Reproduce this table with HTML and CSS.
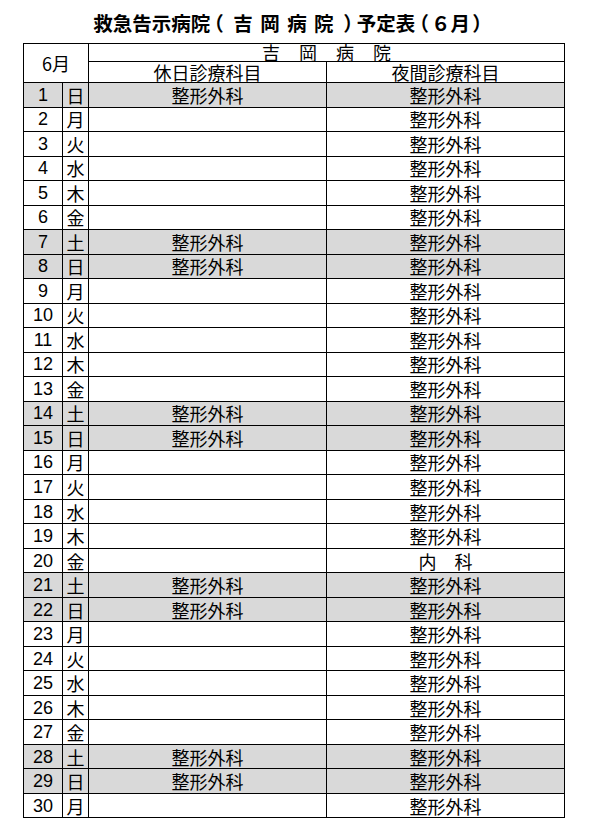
FILE: index.html
```html
<!DOCTYPE html>
<html lang="ja">
<head>
<meta charset="utf-8">
<title>救急告示病院 予定表</title>
<link rel="stylesheet" href="styles.css">
</head>
<body>
<div class="page">
  <h1 class="title">救急告示病院<span class="p">（</span> 吉 岡 病 院 <span class="p">）</span>予定表<span class="p">（</span>６月<span class="p">）</span></h1>
  <table class="sched">
    <colgroup><col class="c-num"><col class="c-wd"><col class="c-hol"><col class="c-night"></colgroup>
    <thead>
      <tr class="h1"><th colspan="2" rowspan="2" class="month">6月</th><th colspan="2" class="hosp"><span>吉</span><span>岡</span><span>病</span><span>院</span></th></tr>
      <tr class="h2"><th>休日診療科目</th><th>夜間診療科目</th></tr>
    </thead>
    <tbody>
      <tr class="we"><td class="num">1</td><td class="wd">日</td><td>整形外科</td><td>整形外科</td></tr>
      <tr><td class="num">2</td><td class="wd">月</td><td></td><td>整形外科</td></tr>
      <tr><td class="num">3</td><td class="wd">火</td><td></td><td>整形外科</td></tr>
      <tr><td class="num">4</td><td class="wd">水</td><td></td><td>整形外科</td></tr>
      <tr><td class="num">5</td><td class="wd">木</td><td></td><td>整形外科</td></tr>
      <tr><td class="num">6</td><td class="wd">金</td><td></td><td>整形外科</td></tr>
      <tr class="we"><td class="num">7</td><td class="wd">土</td><td>整形外科</td><td>整形外科</td></tr>
      <tr class="we"><td class="num">8</td><td class="wd">日</td><td>整形外科</td><td>整形外科</td></tr>
      <tr><td class="num">9</td><td class="wd">月</td><td></td><td>整形外科</td></tr>
      <tr><td class="num">10</td><td class="wd">火</td><td></td><td>整形外科</td></tr>
      <tr><td class="num">11</td><td class="wd">水</td><td></td><td>整形外科</td></tr>
      <tr><td class="num">12</td><td class="wd">木</td><td></td><td>整形外科</td></tr>
      <tr><td class="num">13</td><td class="wd">金</td><td></td><td>整形外科</td></tr>
      <tr class="we"><td class="num">14</td><td class="wd">土</td><td>整形外科</td><td>整形外科</td></tr>
      <tr class="we"><td class="num">15</td><td class="wd">日</td><td>整形外科</td><td>整形外科</td></tr>
      <tr><td class="num">16</td><td class="wd">月</td><td></td><td>整形外科</td></tr>
      <tr><td class="num">17</td><td class="wd">火</td><td></td><td>整形外科</td></tr>
      <tr><td class="num">18</td><td class="wd">水</td><td></td><td>整形外科</td></tr>
      <tr><td class="num">19</td><td class="wd">木</td><td></td><td>整形外科</td></tr>
      <tr><td class="num">20</td><td class="wd">金</td><td></td><td>内　科</td></tr>
      <tr class="we"><td class="num">21</td><td class="wd">土</td><td>整形外科</td><td>整形外科</td></tr>
      <tr class="we"><td class="num">22</td><td class="wd">日</td><td>整形外科</td><td>整形外科</td></tr>
      <tr><td class="num">23</td><td class="wd">月</td><td></td><td>整形外科</td></tr>
      <tr><td class="num">24</td><td class="wd">火</td><td></td><td>整形外科</td></tr>
      <tr><td class="num">25</td><td class="wd">水</td><td></td><td>整形外科</td></tr>
      <tr><td class="num">26</td><td class="wd">木</td><td></td><td>整形外科</td></tr>
      <tr><td class="num">27</td><td class="wd">金</td><td></td><td>整形外科</td></tr>
      <tr class="we"><td class="num">28</td><td class="wd">土</td><td>整形外科</td><td>整形外科</td></tr>
      <tr class="we"><td class="num">29</td><td class="wd">日</td><td>整形外科</td><td>整形外科</td></tr>
      <tr><td class="num">30</td><td class="wd">月</td><td></td><td>整形外科</td></tr>
    </tbody>
  </table>
</div>
</body>
</html>
```

FILE: styles.css
```css
html, body {
  margin: 0;
  padding: 0;
  background: #fff;
}
body {
  font-family: "Noto Sans CJK JP", "Liberation Sans", sans-serif;
  color: #000;
}
.page {
  padding-left: 23px;
  width: 541px;
}
.title {
  margin: 0;
  box-sizing: border-box;
  height: 43px;
  padding-top: 13px;
  padding-right: 8px;
  font-size: 19.5px;
  line-height: 20px;
  font-weight: bold;
  text-align: center;
  white-space: pre;
  word-spacing: 3px;
}
.title .p {
  font-feature-settings: "palt";
  margin: 0 3px;
}
.sched {
  border-collapse: collapse;
  table-layout: fixed;
  width: 541px;
}
.c-num { width: 39px; }
.c-wd { width: 26px; }
.c-hol { width: 238px; }
.c-night { width: 238px; }
.sched th,
.sched td {
  border: 1px solid #000;
  padding: 0;
  text-align: center;
  vertical-align: middle;
  font-weight: normal;
  font-size: 18px;
  line-height: 20px;
}
.sched .h1 th { height: 17px; line-height: 17px; }
.sched .h2 th { height: 20px; }
.month { font-size: 17px; }
.hosp span { margin: 0 9.5px; }
.sched tbody td { height: 23.53px; }
.sched tr.we td { background: #d9d9d9; }
.sched td.num {
  font-family: "Liberation Sans", sans-serif;
  font-size: 18px;
}
```
